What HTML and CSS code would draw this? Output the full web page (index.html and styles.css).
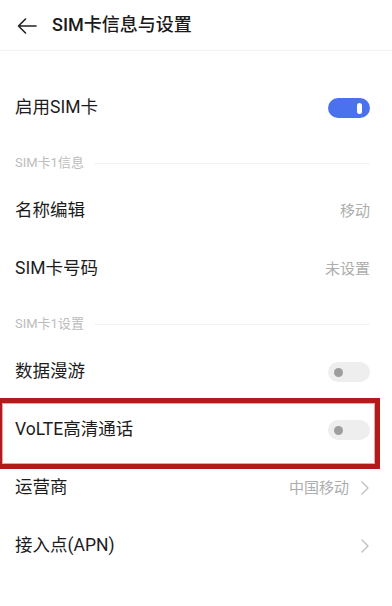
FILE: index.html
```html
<!DOCTYPE html>
<html lang="zh-CN">
<head>
<meta charset="utf-8">
<link rel="stylesheet" href="styles.css">
</head>
<body>
<div class="page">
  <header class="topbar">
    <svg class="back" width="20" height="16" viewBox="0 0 20 16"><path d="M19 8H1.5M8.5 1L1.5 8l7 7" fill="none" stroke="#222" stroke-width="1.6" stroke-linecap="round" stroke-linejoin="round"/></svg>
    <h1 class="title">SIM卡信息与设置</h1>
  </header>
  <div class="spacer"></div>
  <div class="row"><span class="label">启用SIM卡</span><span class="switch on"><span class="knob"></span></span></div>
  <div class="section"><span class="section-text">SIM卡1信息</span><span class="section-line"></span></div>
  <div class="row"><span class="label">名称编辑</span><span class="value">移动</span></div>
  <div class="row"><span class="label">SIM卡号码</span><span class="value">未设置</span></div>
  <div class="section"><span class="section-text">SIM卡1设置</span><span class="section-line"></span></div>
  <div class="row"><span class="label">数据漫游</span><span class="switch off"><span class="dot"></span></span></div>
  <div class="row highlight-host"><span class="label">VoLTE高清通话</span><span class="switch off"><span class="dot"></span></span><span class="highlight"></span></div>
  <div class="row"><span class="label">运营商</span><span class="value">中国移动<svg class="chev" width="8" height="14" viewBox="0 0 8 14"><path d="M1 1l6 6-6 6" fill="none" stroke="#bdbdbd" stroke-width="1.3" stroke-linecap="round" stroke-linejoin="round"/></svg></span></div>
  <div class="row"><span class="label">接入点(APN)</span><span class="value"><svg class="chev" width="8" height="14" viewBox="0 0 8 14"><path d="M1 1l6 6-6 6" fill="none" stroke="#bdbdbd" stroke-width="1.3" stroke-linecap="round" stroke-linejoin="round"/></svg></span></div>
</div>
</body>
</html>
```

FILE: styles.css
```css
html, body {
  margin: 0;
  padding: 0;
  background: #ffffff;
}
body {
  font-family: Roboto, "Noto Sans CJK SC", sans-serif;
  color: #1c1c1c;
  width: 392px;
  height: 606px;
  overflow: hidden;
}
.page {
  display: flex;
  flex-direction: column;
}
.topbar {
  height: 51px;
  display: flex;
  align-items: center;
  padding-left: 17px;
  border-bottom: 1px solid #f3f3f3;
  box-sizing: border-box;
}
.back {
  display: block;
  margin-top: 1px;
}
.title {
  margin: 0 0 0 15px;
  font-size: 18px;
  font-weight: 500;
  color: #1a1a1a;
  line-height: 1;
}
.spacer {
  height: 28px;
}
.row {
  height: 58px;
  display: flex;
  align-items: center;
  justify-content: space-between;
  padding: 0 22px 0 15px;
  box-sizing: border-box;
}
.label {
  font-size: 17.5px;
  line-height: 1;
  color: #1c1c1c;
}
.value {
  display: flex;
  align-items: center;
  font-size: 15px;
  line-height: 1;
  color: #adadad;
}
.chev {
  display: block;
  margin-left: 12px;
  margin-right: 1px;
}
.switch {
  width: 42px;
  height: 20px;
  border-radius: 10px;
  display: flex;
  align-items: center;
  box-sizing: border-box;
}
.switch.on {
  background: #4a72ef;
  justify-content: flex-end;
  padding-right: 8px;
}
.knob {
  width: 5px;
  height: 11px;
  border-radius: 3px;
  background: #ffffff;
}
.switch.off {
  background: #eeeeee;
  padding-left: 6px;
}
.dot {
  width: 9px;
  height: 9px;
  border-radius: 50%;
  background: #9e9e9e;
}
.section {
  height: 45px;
  display: flex;
  align-items: flex-start;
  padding: 18px 22px 0 15px;
  box-sizing: border-box;
}
.section-text {
  font-size: 13px;
  line-height: 16px;
  color: #bcbcbc;
  white-space: nowrap;
}
.section-line {
  flex: 1;
  height: 1px;
  background: #f2f2f2;
  margin: 8px 0 0 10px;
}
.highlight-host {
  position: relative;
}
.highlight {
  position: absolute;
  left: -3px;
  top: -3px;
  width: 383px;
  height: 71px;
  border: 5px solid #b51a1a;
  box-sizing: border-box;
  box-shadow: inset 0 0 0 1px #e8a5a5;
}
```
